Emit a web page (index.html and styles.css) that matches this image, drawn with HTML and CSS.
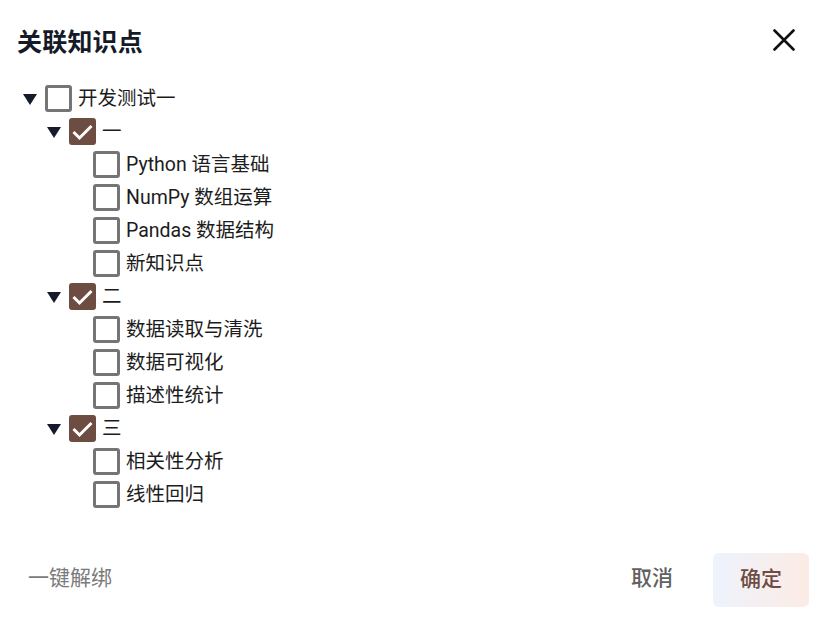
FILE: index.html
```html
<!DOCTYPE html>
<html lang="zh-CN">

<head>
    <meta charset="UTF-8">
    <meta name="viewport" content="width=device-width, initial-scale=1.0">
    <title>关联知识点</title>
    <link rel="stylesheet" href="styles.css">
</head>

<body>
    <div class="dialog">
        <div class="dialog-header">
            <h2 class="dialog-title">关联知识点</h2>
            <button class="close-btn" aria-label="关闭">
                <svg width="22" height="22" viewBox="0 0 22 22">
                    <path d="M1.5 1.5 L20.5 20.5 M20.5 1.5 L1.5 20.5" stroke="#111" stroke-width="2.6" stroke-linecap="round" fill="none" />
                </svg>
            </button>
        </div>

        <ul class="tree">
            <li class="node level-0">
                <span class="toggle"></span>
                <span class="check"></span>
                <span class="label">开发测试一</span>
            </li>
            <li class="node level-1">
                <span class="toggle"></span>
                <span class="check checked">
                    <svg width="21" height="21" viewBox="0 0 21 21"><path d="M1.5 11 L7.5 17 L19.5 5" stroke="#fff" stroke-width="3" fill="none" /></svg>
                </span>
                <span class="label">一</span>
            </li>
            <li class="node level-2">
                <span class="toggle empty"></span>
                <span class="check"></span>
                <span class="label">Python 语言基础</span>
            </li>
            <li class="node level-2">
                <span class="toggle empty"></span>
                <span class="check"></span>
                <span class="label">NumPy 数组运算</span>
            </li>
            <li class="node level-2">
                <span class="toggle empty"></span>
                <span class="check"></span>
                <span class="label">Pandas 数据结构</span>
            </li>
            <li class="node level-2">
                <span class="toggle empty"></span>
                <span class="check"></span>
                <span class="label">新知识点</span>
            </li>
            <li class="node level-1">
                <span class="toggle"></span>
                <span class="check checked">
                    <svg width="21" height="21" viewBox="0 0 21 21"><path d="M1.5 11 L7.5 17 L19.5 5" stroke="#fff" stroke-width="3" fill="none" /></svg>
                </span>
                <span class="label">二</span>
            </li>
            <li class="node level-2">
                <span class="toggle empty"></span>
                <span class="check"></span>
                <span class="label">数据读取与清洗</span>
            </li>
            <li class="node level-2">
                <span class="toggle empty"></span>
                <span class="check"></span>
                <span class="label">数据可视化</span>
            </li>
            <li class="node level-2">
                <span class="toggle empty"></span>
                <span class="check"></span>
                <span class="label">描述性统计</span>
            </li>
            <li class="node level-1">
                <span class="toggle"></span>
                <span class="check checked">
                    <svg width="21" height="21" viewBox="0 0 21 21"><path d="M1.5 11 L7.5 17 L19.5 5" stroke="#fff" stroke-width="3" fill="none" /></svg>
                </span>
                <span class="label">三</span>
            </li>
            <li class="node level-2">
                <span class="toggle empty"></span>
                <span class="check"></span>
                <span class="label">相关性分析</span>
            </li>
            <li class="node level-2">
                <span class="toggle empty"></span>
                <span class="check"></span>
                <span class="label">线性回归</span>
            </li>
        </ul>

        <div class="dialog-footer">
            <button class="btn btn-text unbind">一键解绑</button>
            <div class="actions">
                <button class="btn btn-text cancel">取消</button>
                <button class="btn btn-primary">确定</button>
            </div>
        </div>
    </div>
</body>

</html>
```

FILE: styles.css
```css
* {
    box-sizing: border-box;
}

body {
    margin: 0;
    padding: 0;
    background-color: #fff;
    font-family: Roboto, "Noto Sans CJK SC", sans-serif;
    color: #1c1c1c;
}

.dialog {
    width: 825px;
    height: 621px;
    display: flex;
    flex-direction: column;
}

.dialog-header {
    display: flex;
    justify-content: space-between;
    align-items: center;
    height: 80px;
    padding: 0 30px 0 17px;
}

.dialog-title {
    margin: 0;
    font-size: 25px;
    font-weight: 700;
    color: #151a28;
    letter-spacing: 0.2px;
}

.close-btn {
    background: none;
    border: none;
    padding: 0;
    cursor: pointer;
    display: flex;
}

/* Tree */
.tree {
    list-style: none;
    margin: 0;
    padding: 2px 0 0 0;
}

.node {
    display: flex;
    align-items: center;
    height: 33px;
    padding-left: 18px;
}

.node.level-1 {
    padding-left: 42px;
}

.node.level-2 {
    padding-left: 66px;
}

.toggle {
    width: 24px;
    height: 24px;
    position: relative;
}

.toggle::before {
    content: "";
    position: absolute;
    left: 5px;
    top: 7px;
    border-left: 7px solid transparent;
    border-right: 7px solid transparent;
    border-top: 11px solid #161b2b;
}

.toggle.empty::before {
    display: none;
}

.check {
    width: 27px;
    height: 27px;
    margin-left: 3px;
    border: 3px solid #757575;
    border-radius: 3px;
    display: flex;
}

.check.checked {
    background-color: #6d4c41;
    border-color: #6d4c41;
}

.label {
    margin-left: 6px;
    font-size: 19.5px;
    line-height: 1;
    color: #1c1c1c;
}

/* Footer */
.dialog-footer {
    margin-top: auto;
    display: flex;
    justify-content: space-between;
    align-items: center;
    padding: 0 16px 14px 28px;
}

.actions {
    display: flex;
    align-items: center;
    gap: 20px;
}

.btn {
    font-family: Roboto, "Noto Sans CJK SC", sans-serif;
    font-size: 21px;
    line-height: 1;
    border: none;
    background: none;
    cursor: pointer;
    padding: 0;
}

.unbind {
    color: #7b7b7b;
    padding-bottom: 4px;
}

.cancel {
    color: #616161;
    font-weight: 500;
    padding: 0 20px 4px;
}

.btn-primary {
    width: 96px;
    height: 54px;
    border-radius: 6px;
    padding-bottom: 2px;
    background: linear-gradient(90deg, #eef3fd, #fcebe4);
    color: #6d4c41;
    font-weight: 500;
}
```
